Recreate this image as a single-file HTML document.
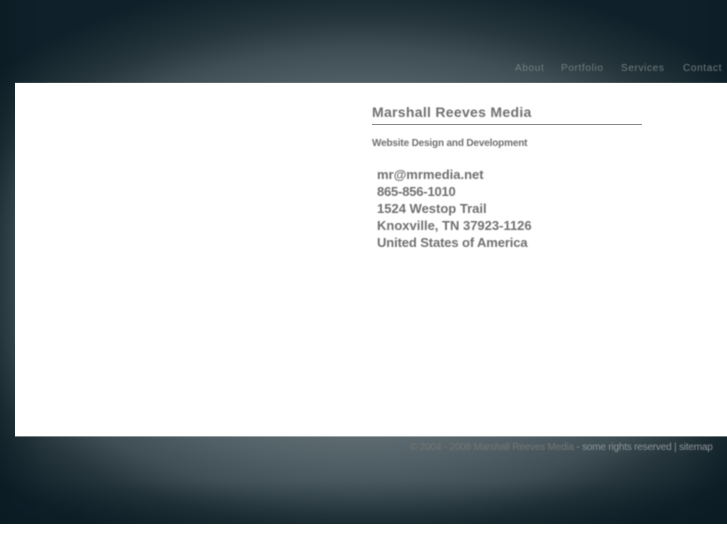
<!DOCTYPE html>
<html>
<head>
<meta charset="utf-8">
<style>
html,body{margin:0;padding:0;width:727px;height:545px;overflow:hidden;background:#fff;font-family:"Liberation Sans",sans-serif}
#bg{position:absolute;left:0;top:0;width:727px;height:524px;background:
linear-gradient(180deg,rgba(8,24,32,0) 480px,rgba(8,24,32,.2) 500px,rgba(8,24,32,.42) 524px),
linear-gradient(90deg,rgba(8,24,32,.45) 0,rgba(8,24,32,.25) 15px,rgba(8,24,32,0) 45px,rgba(8,24,32,0) 682px,rgba(8,24,32,.3) 727px),
radial-gradient(ellipse 500px 302px at 363px 275px,#6e7c82 40%,#5e6c72 53%,#505f65 63%,#3e4e54 74.5%,#26363c 84.4%,#1c2c33 91%,#10202a 100%);background-color:#10202a}
#panel{position:absolute;left:15px;top:83px;width:712px;height:353px;background:#fff;box-shadow:0 -1px 0 rgba(255,255,255,.12),0 1px 0 rgba(255,255,255,.4)}
.t{position:absolute;white-space:nowrap;filter:blur(.4px)}
.n{top:62px;font-size:10px;line-height:13px;letter-spacing:.65px;color:#747d81}
.a{left:377px;font-size:13px;line-height:17px;font-weight:bold;color:#707070}
</style>
</head>
<body>
<div id="bg"></div>
<div id="panel"></div>
<div class="t n" style="left:515px">About</div>
<div class="t n" style="left:561px">Portfolio</div>
<div class="t n" style="left:621px">Services</div>
<div class="t n" style="left:683px">Contact</div>
<div class="t" style="left:372px;top:104px;font-size:14px;line-height:17px;font-weight:bold;color:#707070;letter-spacing:.3px">Marshall Reeves Media</div>
<div style="position:absolute;left:372px;top:124px;width:270px;height:1px;background:#888"></div>
<div class="t" style="left:372px;top:137px;font-size:10px;line-height:13px;font-weight:bold;color:#707070;letter-spacing:-.17px">Website Design and Development</div>
<div class="t a" style="top:166px">mr@mrmedia.net</div>
<div class="t a" style="top:183px;letter-spacing:-.2px">865-856-1010</div>
<div class="t a" style="top:200px">1524 Westop Trail</div>
<div class="t a" style="top:217px">Knoxville, TN 37923-1126</div>
<div class="t a" style="top:234px;letter-spacing:-.12px">United States of America</div>
<div class="t" style="left:410px;top:441px;font-size:10px;line-height:13px;color:#747474;letter-spacing:-.2px">© 2004 - 2008 Marshall Reeves Media<span style="color:#8d9599"> - some rights reserved | sitemap</span></div>
</body>
</html>
